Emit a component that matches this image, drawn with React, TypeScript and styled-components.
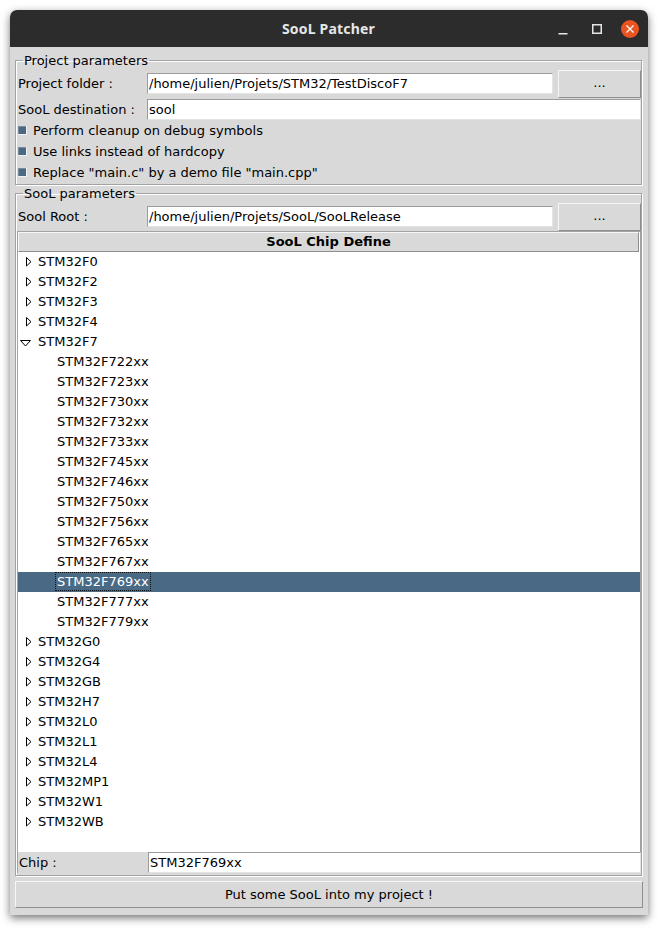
import React from 'react';
import styled, { createGlobalStyle } from 'styled-components';

const Global = createGlobalStyle`
  html, body { margin: 0; padding: 0; background: #ffffff; }
  body { font-family: "DejaVu Sans", "Liberation Sans", sans-serif; font-size: 13px; color: #000; }
  * { box-sizing: border-box; }
`;

const Page = styled.div`
  padding: 10px 0 0 10px;
  height: 930px;
`;

const Window = styled.div`
  width: 638px;
  height: 905px;
  display: flex;
  flex-direction: column;
  border-radius: 7px 7px 0 0;
  overflow: hidden;
  box-shadow: 0 3px 9px rgba(0, 0, 0, 0.55);
`;

const TitleBar = styled.div`
  height: 37px;
  flex: none;
  background: #2c2c2c;
  display: grid;
  grid-template-columns: 1fr auto 1fr;
  align-items: center;
  padding-right: 9px;
`;

const Title = styled.div`
  grid-column: 2;
  font-family: "Noto Sans", "DejaVu Sans", sans-serif;
  font-weight: 700;
  font-size: 14px;
  color: #e6e6e6;
  letter-spacing: 0.2px;
  padding-left: 8px;
`;

const Controls = styled.div`
  grid-column: 3;
  justify-self: end;
  display: flex;
  align-items: center;
  gap: 14px;
`;

const Ctrl = styled.div`
  width: 20px;
  height: 20px;
  display: flex;
  align-items: center;
  justify-content: center;
`;

const CloseBtn = styled.div`
  width: 18px;
  height: 18px;
  border-radius: 50%;
  background: #e95420;
  display: flex;
  align-items: center;
  justify-content: center;
`;

const Body = styled.div`
  flex: 1;
  background: #d9d9d9;
  display: flex;
  flex-direction: column;
  padding: 6px 6px 7px 5px;
  gap: 1px;
`;

const Group = styled.fieldset<{ $grow?: boolean }>`
  margin: 0;
  padding: 2px 0 1px 1px;
  min-width: 0;
  border: 1px solid #a2a2a2;
  box-shadow: inset 1px 1px 0 #ffffff, 1px 1px 0 #ffffff;
  display: flex;
  flex-direction: column;
  ${(p) => (p.$grow ? 'flex: 1; min-height: 0; padding-bottom: 2px;' : '')}
`;

const Legend = styled.legend`
  margin-left: 6px;
  padding: 0 1px;
  font-size: 13px;
  line-height: 15px;
`;

const FieldRow = styled.div<{ $h: number; $button?: boolean }>`
  display: grid;
  grid-template-columns: ${(p) => (p.$button ? '130px 1fr 88px' : '130px 1fr')};
  align-items: start;
  height: ${(p) => p.$h}px;
  flex: none;
`;

const FieldLabel = styled.div<{ $top?: number }>`
  padding-left: 1px;
  white-space: nowrap;
  line-height: 21px;
  margin-top: ${(p) => p.$top ?? 0}px;
`;

const Entry = styled.div<{ $top?: number }>`
  height: 21px;
  margin-top: ${(p) => p.$top ?? 0}px;
  background: #ffffff;
  border: 1px solid;
  border-color: #9c9c9c #e4e4e4 #e4e4e4 #9c9c9c;
  padding-left: 1px;
  display: flex;
  align-items: center;
  white-space: nowrap;
  overflow: hidden;
`;

const SmallButton = styled.div`
  height: 28px;
  margin-left: 5px;
  background: #d9d9d9;
  border: 1px solid;
  border-color: #f6f6f6 #8e8e8e #8e8e8e #f6f6f6;
  display: flex;
  align-items: center;
  justify-content: center;
  padding-bottom: 3px;
`;

const CheckRow = styled.div`
  height: 21px;
  display: flex;
  align-items: center;
  gap: 6px;
  padding-left: 1px;
  flex: none;
`;

const CheckBox = styled.div`
  width: 9px;
  height: 9px;
  background: #4a6984;
  box-shadow: inset -1px -1px 0 #f2f2f2, inset 1px 1px 0 #7a8a98;
`;

const Tree = styled.div`
  flex: 1;
  min-height: 0;
  border: 1px solid #a2a2a2;
  border-bottom: none;
  background: #ffffff;
  display: flex;
  flex-direction: column;
`;

const TreeHeading = styled.div`
  height: 20px;
  flex: none;
  background: #d9d9d9;
  border: 1px solid;
  border-color: #f6f6f6 #8e8e8e #8e8e8e #f6f6f6;
  font-weight: 700;
  text-align: center;
  line-height: 17px;
  margin-right: 1px;
`;

const TreeRows = styled.div`
  flex: 1;
  overflow: hidden;
`;

const TreeRow = styled.div<{ $depth: number; $selected?: boolean }>`
  height: 20px;
  display: flex;
  align-items: center;
  gap: 4px;
  padding-left: ${(p) => (p.$depth === 0 ? 2 : 38)}px;
  padding-bottom: 1px;
  background: ${(p) => (p.$selected ? '#4a6984' : 'transparent')};
  color: ${(p) => (p.$selected ? '#ffffff' : '#000000')};
`;

const Toggle = styled.span<{ $open: boolean }>`
  width: 13px;
  height: 19px;
  display: flex;
  align-items: center;
  padding-left: ${(p) => (p.$open ? 0 : 6)}px;
  padding-top: ${(p) => (p.$open ? 3 : 1)}px;
`;

const ItemText = styled.span<{ $focus?: boolean }>`
  padding: 0 1px;
  line-height: 17px;
  outline: ${(p) => (p.$focus ? '1px dotted #111' : 'none')};
`;

const ChipRow = styled(FieldRow)`
  border-left: 1px solid #a2a2a2;
`;

const ChipLabel = styled(FieldLabel)`
  background: #d9d9d9;
`;

const BigButton = styled.div`
  margin-top: 4px;
  height: 27px;
  flex: none;
  width: 628px;
  background: #d9d9d9;
  border: 1px solid;
  border-color: #f6f6f6 #8e8e8e #8e8e8e #f6f6f6;
  display: flex;
  align-items: center;
  justify-content: center;
`;

const Collapsed = () => (
  <svg width="6" height="10" viewBox="0 0 6 10">
    <path d="M0.5 0.5 L5 4.75 L0.5 9 Z" fill="none" stroke="#000" strokeWidth="1" />
  </svg>
);

const Expanded = () => (
  <svg width="11" height="7" viewBox="0 0 11 7">
    <path d="M0.5 0.5 L10.5 0.5 L5.5 6 Z" fill="none" stroke="#000" strokeWidth="1" />
  </svg>
);

const f7 = [
  'STM32F722xx', 'STM32F723xx', 'STM32F730xx', 'STM32F732xx', 'STM32F733xx', 'STM32F745xx',
  'STM32F746xx', 'STM32F750xx', 'STM32F756xx', 'STM32F765xx', 'STM32F767xx', 'STM32F769xx',
  'STM32F777xx', 'STM32F779xx',
];

const before = ['STM32F0', 'STM32F2', 'STM32F3', 'STM32F4'];
const after = ['STM32G0', 'STM32G4', 'STM32GB', 'STM32H7', 'STM32L0', 'STM32L1', 'STM32L4', 'STM32MP1', 'STM32W1', 'STM32WB'];

const Family = ({ name, open }: { name: string; open?: boolean }) => (
  <TreeRow $depth={0}>
    <Toggle $open={!!open}>{open ? <Expanded /> : <Collapsed />}</Toggle>
    <ItemText>{name}</ItemText>
  </TreeRow>
);

export default function App() {
  return (
    <Page>
      <Global />
      <Window>
        <TitleBar>
          <Title>SooL Patcher</Title>
          <Controls>
            <Ctrl>
              <svg width="10" height="20" viewBox="0 0 10 20">
                <rect x="0.5" y="14" width="9" height="1.5" fill="#e6e6e6" />
              </svg>
            </Ctrl>
            <Ctrl>
              <svg width="10" height="10" viewBox="0 0 10 10">
                <rect x="0.75" y="0.75" width="8.5" height="8.5" fill="none" stroke="#e6e6e6" strokeWidth="1.5" />
              </svg>
            </Ctrl>
            <CloseBtn>
              <svg width="10" height="10" viewBox="0 0 10 10">
                <path d="M1.5 1.5 L8.5 8.5 M8.5 1.5 L1.5 8.5" stroke="#fff" strokeWidth="1.3" />
              </svg>
            </CloseBtn>
          </Controls>
        </TitleBar>
        <Body>
          <Group>
            <Legend>Project parameters</Legend>
            <FieldRow $h={29} $button>
              <FieldLabel $top={3}>Project folder :</FieldLabel>
              <Entry $top={3}>/home/julien/Projets/STM32/TestDiscoF7</Entry>
              <SmallButton>...</SmallButton>
            </FieldRow>
            <FieldRow $h={21}>
              <FieldLabel>SooL destination :</FieldLabel>
              <Entry>sool</Entry>
            </FieldRow>
            <CheckRow>
              <CheckBox />
              <span>Perform cleanup on debug symbols</span>
            </CheckRow>
            <CheckRow>
              <CheckBox />
              <span>Use links instead of hardcopy</span>
            </CheckRow>
            <CheckRow>
              <CheckBox />
              <span>Replace "main.c" by a demo file "main.cpp"</span>
            </CheckRow>
          </Group>
          <Group $grow>
            <Legend>SooL parameters</Legend>
            <FieldRow $h={28} $button>
              <FieldLabel $top={3}>Sool Root :</FieldLabel>
              <Entry $top={3}>/home/julien/Projets/SooL/SooLRelease</Entry>
              <SmallButton>...</SmallButton>
            </FieldRow>
            <Tree>
              <TreeHeading>SooL Chip Define</TreeHeading>
              <TreeRows>
                {before.map((n) => (
                  <Family key={n} name={n} />
                ))}
                <Family name="STM32F7" open />
                {f7.map((n) => {
                  const sel = n === 'STM32F769xx';
                  return (
                    <TreeRow key={n} $depth={1} $selected={sel}>
                      <ItemText $focus={sel}>{n}</ItemText>
                    </TreeRow>
                  );
                })}
                {after.map((n) => (
                  <Family key={n} name={n} />
                ))}
              </TreeRows>
            </Tree>
            <ChipRow $h={21}>
              <ChipLabel>Chip :</ChipLabel>
              <Entry>STM32F769xx</Entry>
            </ChipRow>
          </Group>
          <BigButton>Put some SooL into my project !</BigButton>
        </Body>
      </Window>
    </Page>
  );
}
